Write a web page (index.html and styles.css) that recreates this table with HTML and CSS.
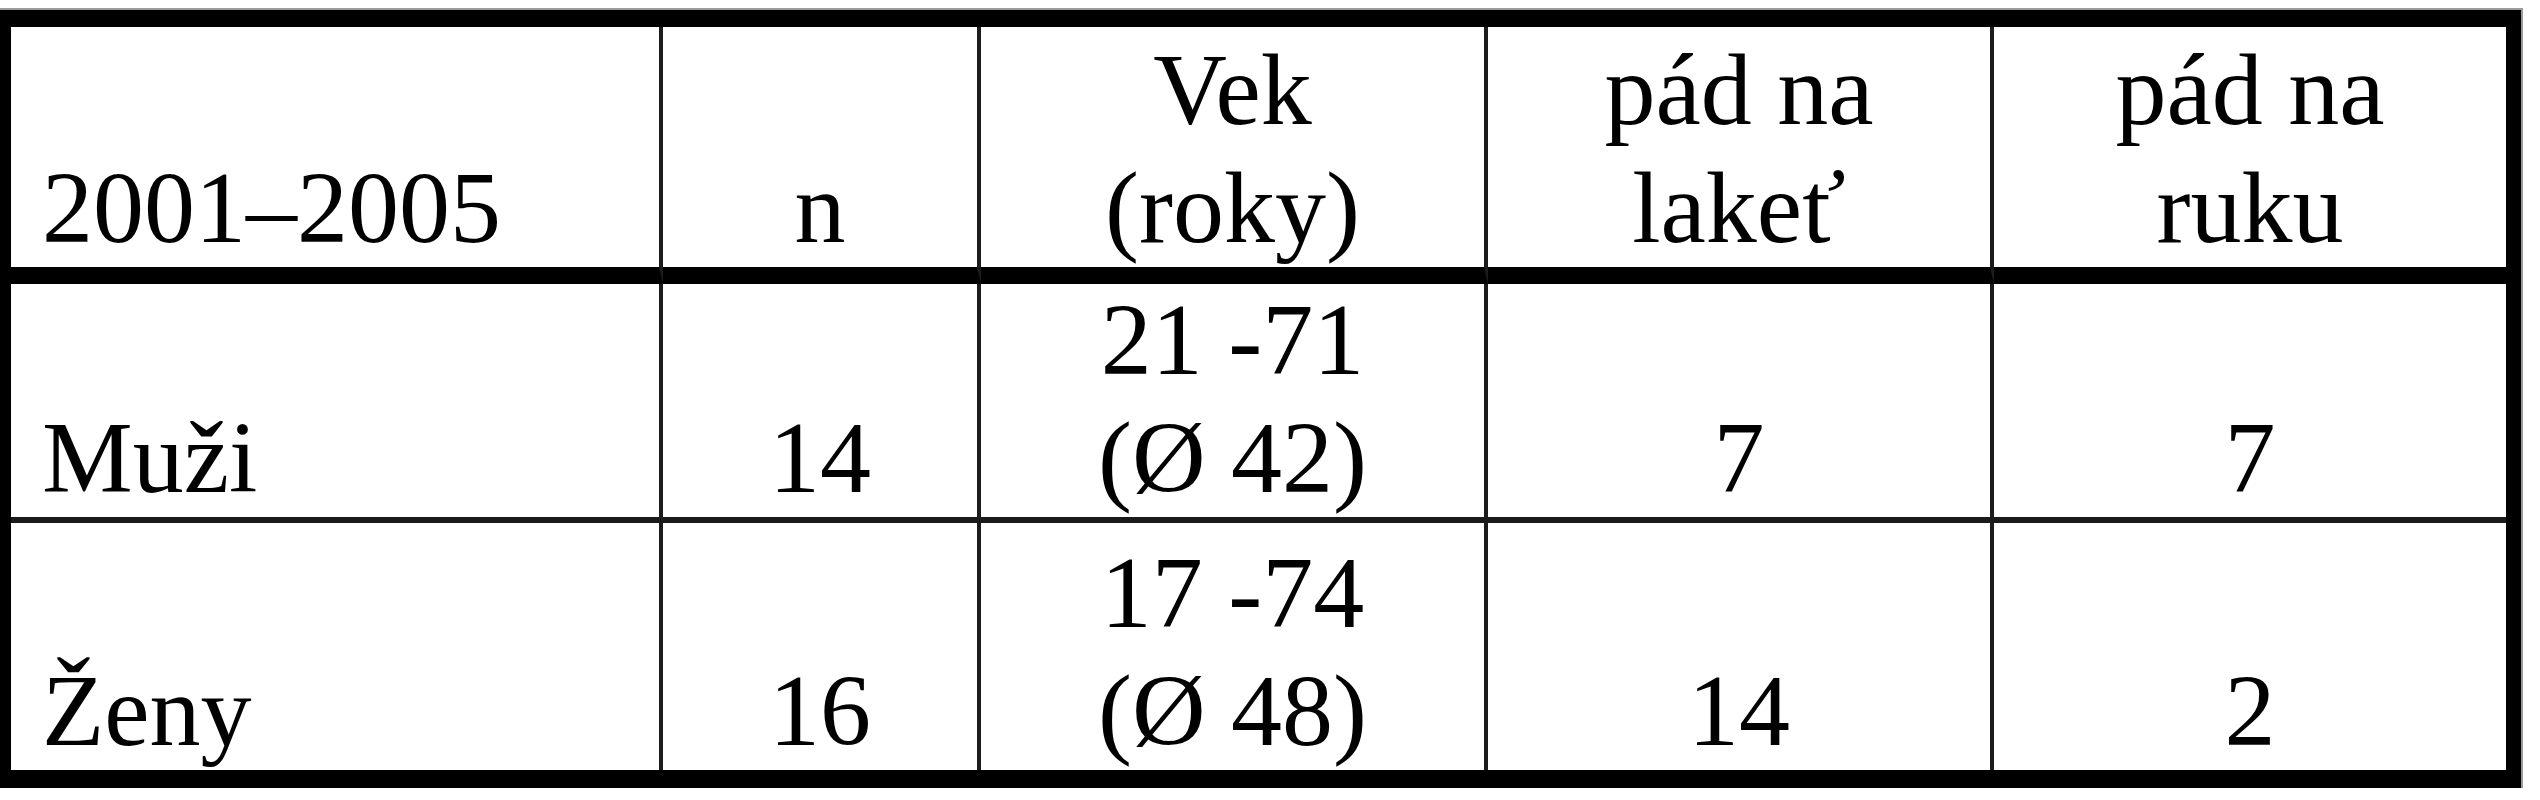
FILE: index.html
```html
<!DOCTYPE html>
<html lang="sk">
<head>
<meta charset="utf-8">
<title>Tabuľka</title>
<link rel="stylesheet" href="styles.css">
</head>
<body>
<div class="table">
  <div class="cell head first"><span>2001–2005</span></div>
  <div class="cell head"><span>n</span></div>
  <div class="cell head"><span>Vek<br>(roky)</span></div>
  <div class="cell head"><span>pád na<br>lakeť</span></div>
  <div class="cell head last"><span>pád na<br>ruku</span></div>

  <div class="cell mid first"><span>Muži</span></div>
  <div class="cell mid"><span>14</span></div>
  <div class="cell mid"><span>21 -71<br>(Ø 42)</span></div>
  <div class="cell mid"><span>7</span></div>
  <div class="cell mid last"><span>7</span></div>

  <div class="cell end first"><span>Ženy</span></div>
  <div class="cell end"><span>16</span></div>
  <div class="cell end"><span>17 -74<br>(Ø 48)</span></div>
  <div class="cell end"><span>14</span></div>
  <div class="cell end last"><span>2</span></div>
</div>
</body>
</html>
```
FILE: styles.css
```css
html, body {
  margin: 0;
  padding: 0;
  background: #ffffff;
}

body {
  font-family: "Liberation Serif", "Times New Roman", serif;
  color: #000;
}

.table {
  display: grid;
  grid-template-columns: 652px 318px 507px 506px 512px;
  grid-template-rows: 257px 239px 247px;
  width: max-content;
  margin-top: 10px;
  border-style: solid;
  border-color: #000;
  border-width: 17px 15px 18px 11px;
  box-shadow: 0 0 0 2px #9a9a9a;
}

.cell {
  box-sizing: border-box;
  display: flex;
  align-items: flex-end;
  justify-content: center;
  text-align: center;
  font-size: 102px;
  line-height: 118px;
  border-right: 4px solid #1c1c1c;
  overflow: visible;
}

.cell span {
  display: block;
}

.cell.first {
  justify-content: flex-start;
  text-align: left;
  padding-left: 31px;
}

.cell.last {
  border-right: 0;
}

.cell.head {
  border-bottom: 17px solid #000;
}

.cell.mid {
  border-bottom: 6px solid #1a1a1a;
}
```
